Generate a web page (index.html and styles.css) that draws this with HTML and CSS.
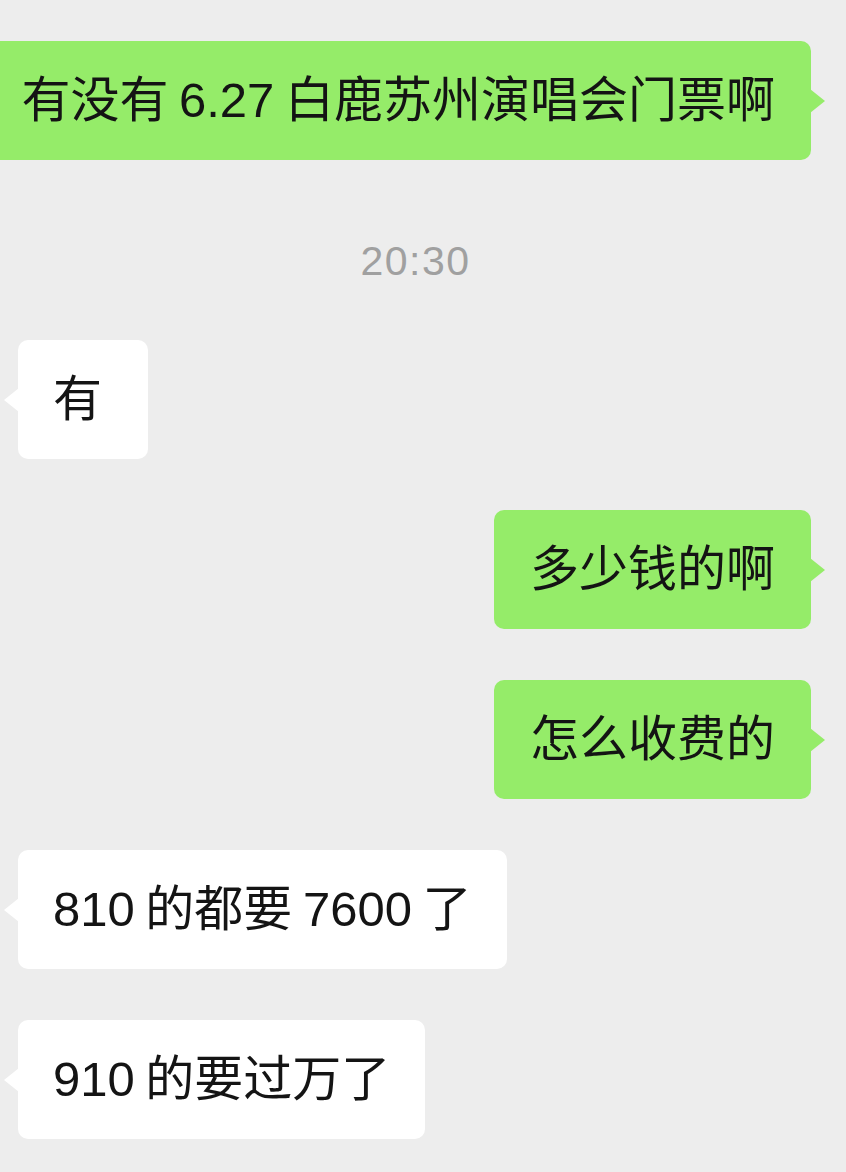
FILE: index.html
```html
<!DOCTYPE html>
<html lang="zh-CN">
<head>
<meta charset="utf-8">
<title>聊天</title>
<link rel="stylesheet" href="styles.css">
</head>
<body>

<div class="chat">
  <div class="msg msg-me">
    <div class="bubble">有没有 6.27 白鹿苏州演唱会门票啊</div>
  </div>

  <div class="time">20:30</div>

  <div class="msg msg-them">
    <div class="bubble">有</div>
  </div>

  <div class="msg msg-me">
    <div class="bubble">多少钱的啊</div>
  </div>

  <div class="msg msg-me">
    <div class="bubble">怎么收费的</div>
  </div>

  <div class="msg msg-them">
    <div class="bubble">810 的都要 7600 了</div>
  </div>

  <div class="msg msg-them">
    <div class="bubble">910 的要过万了</div>
  </div>
</div>

</body>
</html>
```

FILE: styles.css
```css
html, body { margin: 0; padding: 0; }

body {
  background: #ededed;
  color: #141414;
  font-family: "Liberation Sans", "Noto Sans CJK SC", sans-serif;
}

.chat {
  display: flex;
  flex-direction: column;
  gap: 51px;
  padding-top: 41px;
  overflow: hidden;
}

.msg { display: flex; }

.msg-me {
  justify-content: flex-end;
  padding-right: 35px;
}

.msg-them {
  justify-content: flex-start;
  padding-left: 18px;
}

/* bubbles: one line each, tail drawn with a border triangle */
.bubble {
  position: relative;
  flex-shrink: 0;
  min-width: 60px;
  padding: 35px 36px;
  font-size: 49px;
  line-height: 49px;
  word-spacing: -3px;
  white-space: nowrap;
  border-radius: 10px;
}

.msg-me .bubble { background: #95ec69; }

.msg-them .bubble {
  background: #fff;
  padding: 35px;
}

.bubble:after {
  content: "";
  position: absolute;
  top: 50%;
  margin-top: -12px;
  border-top: 12px solid transparent;
  border-bottom: 12px solid transparent;
}

.msg-me .bubble:after {
  right: -14px;
  border-left: 15px solid #95ec69;
}

.msg-them .bubble:after {
  left: -14px;
  border-right: 15px solid #fff;
}

.time {
  margin: 25px 0 3px;
  padding-right: 15px;
  text-align: center;
  font-size: 41px;
  line-height: 50px;
  letter-spacing: 1.5px;
  color: #a0a0a0;
}
```
